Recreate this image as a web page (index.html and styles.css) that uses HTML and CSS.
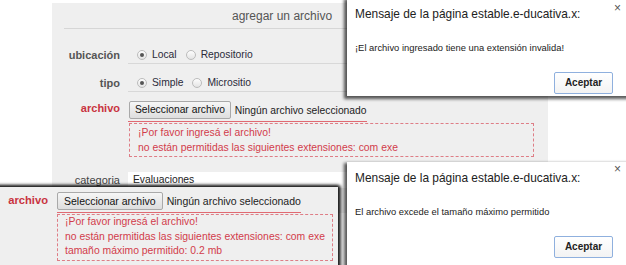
FILE: index.html
```html
<!DOCTYPE html>
<html lang="es">
<head>
<meta charset="utf-8">
<link rel="stylesheet" href="styles.css">
</head>
<body>
<div class="stage">
  <div class="panel">
    <div class="ph">agregar un archivo</div>
    <div class="form">
      <div class="row">
        <div class="lbl">ubicación</div>
        <div class="ctl radios"><span class="radio on"></span><span>Local</span><span class="radio"></span><span>Repositorio</span></div>
      </div>
      <div class="row">
        <div class="lbl">tipo</div>
        <div class="ctl radios"><span class="radio on"></span><span>Simple</span><span class="radio"></span><span>Micrositio</span></div>
      </div>
      <div class="row frow">
        <div class="lbl red">archivo</div>
        <div class="fctl">
          <div class="file"><span class="btn">Seleccionar archivo</span><span class="fname">Ningún archivo seleccionado</span></div>
          <div class="err">¡Por favor ingresá el archivo!<br>no están permitidas las siguientes extensiones: com exe</div>
        </div>
      </div>
      <div class="row crow">
        <div class="lbl plain">categoria</div>
        <div class="inp">Evaluaciones</div>
      </div>
    </div>
  </div>

  <div class="crop">
    <div class="lbl red">archivo</div>
    <div class="fctl">
      <div class="file"><span class="btn">Seleccionar archivo</span><span class="fname">Ningún archivo seleccionado</span></div>
      <div class="err">¡Por favor ingresá el archivo!<br>no están permitidas las siguientes extensiones: com exe<br>tamaño máximo permitido: 0.2 mb</div>
    </div>
  </div>

  <div class="dlg d1">
    <span class="x">×</span>
    <div class="dt">Mensaje de la página estable.e-ducativa.x:</div>
    <div class="dm">¡El archivo ingresado tiene una extensión invalida!</div>
    <div class="da"><span class="ok">Aceptar</span></div>
  </div>

  <div class="dlg d2">
    <span class="x">×</span>
    <div class="dt">Mensaje de la página estable.e-ducativa.x:</div>
    <div class="dm">El archivo excede el tamaño máximo permitido</div>
    <div class="da"><span class="ok">Aceptar</span></div>
  </div>
</div>
</body>
</html>
```

FILE: styles.css
```css
* { box-sizing: border-box; }
html, body { margin: 0; padding: 0; background: #fff; }
body { font-family: "Liberation Sans", Arial, sans-serif; color: #333; }

.stage {
  position: relative;
  width: 626px;
  height: 265px;
  overflow: hidden;
  padding: 3px 0 0 52px;
}

.panel {
  width: 496px;
  height: 210px;
  background: #efefef;
}

.ph {
  margin-left: 12px;
  height: 26px;
  line-height: 26px;
  border-bottom: 1px solid #d6d6d6;
  padding-left: 168px;
  font-size: 12px;
  color: #555;
}

.form { padding-top: 7px; }

.row {
  display: grid;
  grid-template-columns: 68px 1fr;
  column-gap: 8px;
}

.lbl {
  text-align: right;
  font-weight: bold;
  font-size: 11px;
  color: #555;
  padding-top: 13px;
  line-height: 12px;
}
.lbl.red { color: #c9343f; }
.lbl.plain { font-weight: normal; color: #444; }

.ctl {
  padding: 13px 0 2px;
  line-height: 12px;
  border-bottom: 1px solid #d8d8d8;
  margin-right: 8px;
}

.radios {
  display: flex;
  align-items: center;
  font-size: 10.3px;
  color: #2b2b3a;
}
.radio {
  width: 10px;
  height: 10px;
  border-radius: 50%;
  border: 1px solid #bcbcbc;
  background: linear-gradient(#fdfdfd, #e4e4e4);
  margin: 0 5px 0 9px;
  display: inline-flex;
  align-items: center;
  justify-content: center;
}
.radio.on::after {
  content: "";
  width: 4px;
  height: 4px;
  border-radius: 50%;
  background: #555;
}
.radios span:nth-child(2) { margin-right: 0; }

.frow .lbl { padding-top: 7px; line-height: 18px; }
.fctl { padding-top: 7px; }

.file {
  display: inline-flex;
  align-items: center;
  padding: 0 0 2px 1px;
  border-bottom: 1px solid #e06a72;
  font-size: 10.3px;
  color: #222;
  white-space: nowrap;
}
.btn {
  height: 18px;
  line-height: 16px;
  padding: 0 5px;
  border: 1px solid #a9a9a9;
  border-radius: 2px;
  background: linear-gradient(#f6f6f6, #dedede);
  color: #111;
  margin-right: 4px;
}

.err {
  margin: 1px 0 0 1px;
  width: 405px;
  border: 1px dashed #de7d86;
  padding: 2px 8px 1px;
  font-size: 10.4px;
  line-height: 14.5px;
  color: #d23c4b;
  white-space: nowrap;
}

.crow { margin-top: 15px; }
.crow .lbl { padding-top: 0; line-height: 16px; }
.inp {
  background: #fff;
  height: 16px;
  line-height: 16px;
  padding-left: 5px;
  font-size: 10.3px;
  color: #222;
}

/* lower cropped overlay */
.crop {
  position: absolute;
  left: -4px;
  top: 187px;
  width: 342px;
  height: 90px;
  background: #efefef;
  box-shadow: 0 -1px 3px 1px rgba(0,0,0,.8), 2px 0 3px 1px rgba(0,0,0,.7);
  display: grid;
  grid-template-columns: 52px 1fr;
  column-gap: 9px;
  padding-top: 4px;
}
.crop .lbl {
  font-size: 11.2px;
  padding-top: 0;
  line-height: 18px;
}
.crop .fctl { padding-top: 0; }
.crop .file { font-size: 10.5px; padding-left: 0; }
.crop .btn { padding: 0 6px; }
.crop .err {
  margin: 1px 0 0 0;
  width: 276px;
  padding: 0 2px 1px 7px;
  font-size: 10.4px;
  line-height: 14.5px;
}

/* dialogs */
.dlg {
  position: absolute;
  left: 347px;
  width: 285px;
  background: #fff;
  box-shadow: -2px 2px 3px 1px rgba(0,0,0,.65);
  padding: 8px 0 0 8px;
}
.d1 { top: -2px; height: 98px; }
.d2 { top: 162px; height: 120px; }

.x {
  position: absolute;
  top: 5px;
  left: 267px;
  font-size: 12px;
  line-height: 10px;
  color: #555;
}
.d2 .x { top: 2px; }
.dt {
  font-size: 11.9px;
  line-height: 16px;
  color: #222;
}
.dm {
  margin-top: 19px;
  font-size: 9.4px;
  line-height: 14px;
  color: #222;
}
.da {
  margin-top: 17px;
  padding-left: 199px;
}
.ok {
  display: inline-block;
  width: 59px;
  height: 22px;
  line-height: 20px;
  text-align: center;
  border: 1px solid #8fb0de;
  border-radius: 2px;
  background: linear-gradient(#fff, #f3f3f3);
  font-weight: bold;
  font-size: 10px;
  color: #222;
}
```
